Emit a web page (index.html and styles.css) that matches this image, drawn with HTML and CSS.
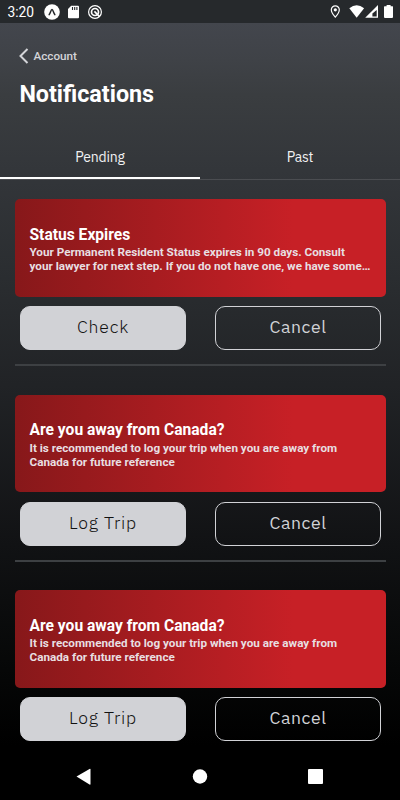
FILE: index.html
```html
<!DOCTYPE html>
<html lang="en">
<head>
<meta charset="utf-8">
<title>Notifications</title>
<link rel="stylesheet" href="styles.css">
</head>
<body>
<div class="status">
  <span class="time">3:20</span>
  <svg class="status-left" width="60" height="16" viewBox="0 0 60 16">
    <circle cx="8" cy="8" r="7.8" fill="#fff"/>
    <path d="M5.2 10.6C6.4 9.2 6.9 5.5 8 5.5s1.6 3.7 2.8 5.1" fill="none" stroke="#24272a" stroke-width="1.5" stroke-linecap="round"/>
    <path d="M27.2 1.7H34q1 0 1 1v10.6q0 1-1 1h-9q-1 0-1-1V5z" fill="#fff"/>
    <path d="M28.5 3v3M30.7 3v3M32.9 3v3" stroke="#24272a" stroke-width="1.1"/>
    <g fill="none" stroke="#fff"><circle cx="51" cy="8" r="6.4" stroke-width="1.2"/><circle cx="51" cy="8" r="3.5" stroke-width="1.7"/><path d="M50.4 7.4l5.2 5.2" stroke-width="1.7"/></g>
  </svg>
  <svg class="status-right" width="64" height="16" viewBox="0 0 64 16">
    <path d="M6.300 1.8a4 4 0 0 0-4 4c0 3 4 7.4 4 7.4s4-4.400 4-7.400a4 4 0 0 0-4-4z" fill="none" stroke="#fff" stroke-width="1.2"/>
    <circle cx="6.300" cy="5.800" r="1.600" fill="#fff"/>
    <path d="M20.300 4.200Q27.700-1.800 35.100 4.200L27.700 13.800z" fill="#fff"/>
    <path d="M49 1v12.800H36.200z" fill="#fff"/><path d="M47.700 6v6.500h-4.300v-3z" fill="#24272a"/>
    <path d="M57.600 1h4v1.300h2q.400 0 .400.700v10q0 1-1 1h-7q-1 0-1-1V3q0-.700.600-.700h2z" fill="#fff"/>
  </svg>
</div>
<header class="header">
  <a class="back"><svg width="10" height="16" viewBox="0 0 10 16"><path d="M8.500 1L1.500 8l7 7" fill="none" stroke="#d3d4d8" stroke-width="2"/></svg><span>Account</span></a>
  <h1>Notifications</h1>
</header>
<nav class="tabs"><div class="tab active">Pending</div><div class="tab">Past</div></nav>
<main class="list">
  <section class="item">
    <div class="card"><h2>Status Expires</h2><p>Your Permanent Resident Status expires in 90 days. Consult<br>your lawyer for next step. If you do not have one, we have some…</p></div>
    <div class="actions"><button class="btn primary">Check</button><button class="btn">Cancel</button></div>
  </section>
  <section class="item">
    <div class="card"><h2>Are you away from Canada?</h2><p>It is recommended to log your trip when you are away from<br>Canada for future reference</p></div>
    <div class="actions"><button class="btn primary">Log Trip</button><button class="btn">Cancel</button></div>
  </section>
  <section class="item">
    <div class="card"><h2>Are you away from Canada?</h2><p>It is recommended to log your trip when you are away from<br>Canada for future reference</p></div>
    <div class="actions"><button class="btn primary">Log Trip</button><button class="btn">Cancel</button></div>
  </section>
</main>
<footer class="navbar">
  <svg width="400" height="48" viewBox="0 0 400 48" fill="#fff"><path d="M76.500 24.500L89.500 17q1-.500 1 .500v14.500q0 1-1 .500z"/><circle cx="200" cy="24.500" r="7.200"/><rect x="308" y="17" width="15" height="15" rx="1"/></svg>
</footer>
</body>
</html>
```
FILE: styles.css
```css
* { box-sizing: border-box; }
body {
  margin: 0;
  width: 400px;
  height: 800px;
  overflow: hidden;
  display: flex;
  flex-direction: column;
  font-family: Roboto, sans-serif;
  color: #fff;
  background: linear-gradient(#43464d 23px, #3f4247 60px, #3a3d40 95px, #33363a 170px, #292c2f 290px, #212326 385px, #111214 545px, #060707 670px, #000 745px);
}
.status {
  height: 23px;
  flex: none;
  display: flex;
  align-items: center;
  padding: 1px 7px 0 7.5px;
  background: #26292c;
}
.time { width: 36.500px; font-size: 13.800px; }
.status-right { margin-left: auto; }
.header { height: 113px; flex: none; padding: 25px 19px 0; }
.back {
  display: flex;
  align-items: center;
  gap: 4.500px;
  height: 16px;
  font-size: 11.700px;
  font-weight: 500;
  color: #d3d4d8;
}
h1 { margin: 16px 0 0 .4px; font-size: 23.300px; line-height: 28px; font-weight: 700; }
.tabs { display: flex; height: 44px; flex: none; border-bottom: 1px solid #4b4d51; }
.tab {
  flex: 1;
  height: 43px;
  padding-top: 11px;
  text-align: center;
  color: #f1f1f2;
  font: 14px/20px "IBM Plex Sans", "Noto Sans", sans-serif;
  letter-spacing: -.2px;
}
.tab.active { border-bottom: 2px solid #fff; }
.list { height: 572px; flex: none; padding: 19px 14.500px 0; }
.item { height: 195.500px; }
.item:not(:last-child)::after {
  content: "";
  display: block;
  height: 2px;
  margin-top: 14px;
  background: #3d4043;
}
.card {
  height: 97.500px;
  padding: 25.500px 15px 0;
  border-radius: 5px;
  background: linear-gradient(90deg, #87181a, #c72026 75%);
}
h2 { margin: 0; font-size: 15.600px; line-height: 20px; font-weight: 700; }
.card p { margin: 1.800px 0 0; font-size: 11.700px; line-height: 13.700px; font-weight: 700; color: #e8dfe1; white-space: nowrap; }
.actions { display: grid; grid-template-columns: 1fr 1fr; gap: 29px; padding: 0 5px; margin-top: 9.500px; }
.btn {
  height: 44px;
  padding: 0 0 2px 1px;
  border: 1px solid #d1d2d6;
  border-radius: 10px;
  background: none;
  color: #d1d2d6;
  font: 400 17.600px/22px "IBM Plex Sans", "Noto Sans", sans-serif;
  letter-spacing: .6px;
}
.primary { background: #d1d2d6; color: #111; font-weight: 300; letter-spacing: .8px; }
.navbar { height: 48px; flex: none; background: #000; }
```
